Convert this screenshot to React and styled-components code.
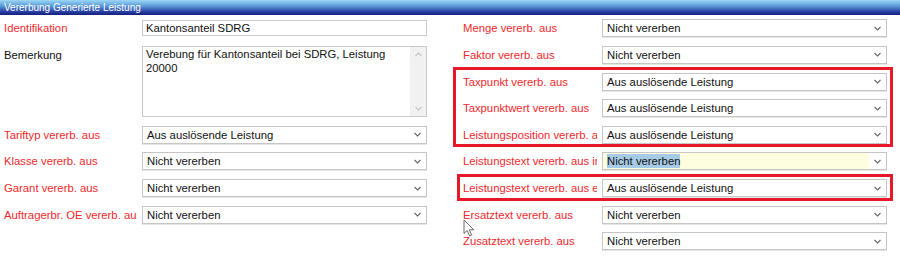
import React from 'react'
import styled, { createGlobalStyle } from 'styled-components'

const GlobalStyle = createGlobalStyle`
  html, body { margin: 0; padding: 0; background: #fff; }
  body { font-family: "Liberation Sans", Arial, sans-serif; }
`

const Page = styled.div`
  position: relative;
  width: 900px;
  height: 259px;
  overflow: hidden;
  background: #fff;
`

const TitleBar = styled.div`
  height: 15px;
  padding-left: 4px;
  display: flex;
  align-items: center;
  color: #fff;
  font-size: 10px;
  background: linear-gradient(#9bd7f5 0%, #5b9ad8 40%, #26399f 80%, #17207a 100%);
`

const Form = styled.div`
  display: flex;
  gap: 36px;
  padding-left: 4px;
`

const Column = styled.div`
  display: grid;
  grid-template-columns: ${p => p.$labelWidth}px 285px;
  grid-auto-rows: 26.625px;
  align-items: center;
`

const Label = styled.div`
  grid-column: 1;
  grid-row: ${p => p.$row};
  margin-right: 5px;
  white-space: nowrap;
  overflow: hidden;
  font-size: 11.3px;
  color: ${p => (p.$plain ? '#111' : '#f0282c')};
`

const TextInput = styled.div`
  grid-column: 2;
  grid-row: ${p => p.$row};
  box-sizing: border-box;
  height: 16px;
  border: 1px solid #c9c9c9;
  padding-left: 3px;
  display: flex;
  align-items: center;
  font-size: 11.3px;
  color: #111;
`

const TextArea = styled.div`
  grid-column: 2;
  grid-row: ${p => p.$row} / span 3;
  box-sizing: border-box;
  height: 71px;
  border: 1px solid #c9c9c9;
  display: flex;
  font-size: 11.3px;
  color: #111;
`

const AreaText = styled.div`
  flex: 1;
  padding: 1px 3px;
  line-height: 13.5px;
`

const ScrollTrack = styled.div`
  width: 16px;
  background: #f1f1f1;
  display: flex;
  flex-direction: column;
  justify-content: space-between;
  align-items: center;
  padding: 5px 0;
  box-sizing: border-box;
`

const Select = styled.div`
  grid-column: 2;
  grid-row: ${p => p.$row};
  box-sizing: border-box;
  height: 18px;
  border: 1px solid #c6c6c6;
  box-shadow: 0 1px 0 #e6e6e6;
  display: flex;
  align-items: stretch;
  font-size: 11.3px;
  color: #111;
  background: #fff;
`

const SelectValue = styled.div`
  flex: 1;
  display: flex;
  align-items: center;
  padding-left: 4px;
  background: ${p => (p.$focused ? '#fdfde0' : '#fff')};
`

const Selected = styled.span`
  background: ${p => (p.$focused ? '#a6cbe6' : 'transparent')};
  line-height: 14px;
`

const Arrow = styled.div`
  width: 17px;
  display: flex;
  align-items: center;
  justify-content: center;
`

const Highlight = styled.div`
  position: absolute;
  box-sizing: border-box;
  border: 3px solid #e8182b;
  pointer-events: none;
`

const Cursor = styled.svg`
  position: absolute;
  left: 463px;
  top: 219px;
`

const Chevron = ({ up, color = '#666' }) => (
  <svg width="7" height="5" viewBox="0 0 7 5">
    <path
      d={up ? 'M0.5 4 L3.5 1 L6.5 4' : 'M0.5 1 L3.5 4 L6.5 1'}
      fill="none"
      stroke={color}
      strokeWidth="1.1"
    />
  </svg>
)

const Dropdown = ({ row, value, focused }) => (
  <Select $row={row}>
    <SelectValue $focused={focused}>
      <Selected $focused={focused}>{value}</Selected>
    </SelectValue>
    <Arrow>
      <Chevron />
    </Arrow>
  </Select>
)

const NV = 'Nicht vererben'
const AUS = 'Aus auslösende Leistung'

const rightRows = [
  ['Menge vererb. aus', NV],
  ['Faktor vererb. aus', NV],
  ['Taxpunkt vererb. aus', AUS],
  ['Taxpunktwert vererb. aus', AUS],
  ['Leistungsposition vererb. aus', AUS],
  ['Leistungstext vererb. aus int', NV, true],
  ['Leistungstext vererb. aus ext', AUS],
  ['Ersatztext vererb. aus', NV],
  ['Zusatztext vererb. aus', NV],
]

const leftSelects = [
  ['Tariftyp vererb. aus', AUS],
  ['Klasse vererb. aus', NV],
  ['Garant vererb. aus', NV],
  ['Auftragerbr. OE vererb. aus', NV],
]

export default function App() {
  return (
    <Page>
      <GlobalStyle />
      <TitleBar>Vererbung Generierte Leistung</TitleBar>
      <Form>
        <Column $labelWidth={138}>
          <Label $row={1}>Identifikation</Label>
          <TextInput $row={1}>Kantonsanteil SDRG</TextInput>
          <Label $row={2} $plain>Bemerkung</Label>
          <TextArea $row={2}>
            <AreaText>
              Verebung für Kantonsanteil bei SDRG, Leistung
              <br />
              20000
            </AreaText>
            <ScrollTrack>
              <Chevron up color="#c4c4c4" />
              <Chevron color="#c4c4c4" />
            </ScrollTrack>
          </TextArea>
          {leftSelects.map(([label, value], i) => (
            <React.Fragment key={label}>
              <Label $row={i + 5}>{label}</Label>
              <Dropdown row={i + 5} value={value} />
            </React.Fragment>
          ))}
        </Column>
        <Column $labelWidth={139}>
          {rightRows.map(([label, value, focused], i) => (
            <React.Fragment key={label}>
              <Label $row={i + 1}>{label}</Label>
              <Dropdown row={i + 1} value={value} focused={focused} />
            </React.Fragment>
          ))}
        </Column>
      </Form>
      <Highlight style={{ left: 453, top: 67, width: 440, height: 80 }} />
      <Highlight style={{ left: 457, top: 174, width: 436, height: 27 }} />
      <Cursor width="13" height="18" viewBox="0 0 13 18">
        <path
          d="M1 1 L1 14.5 L4.2 11.6 L6.6 17 L8.6 16.1 L6.3 10.8 L10.8 10.8 Z"
          fill="#fff"
          stroke="#6a6a6a"
          strokeWidth="1"
          strokeLinejoin="round"
        />
      </Cursor>
    </Page>
  )
}
